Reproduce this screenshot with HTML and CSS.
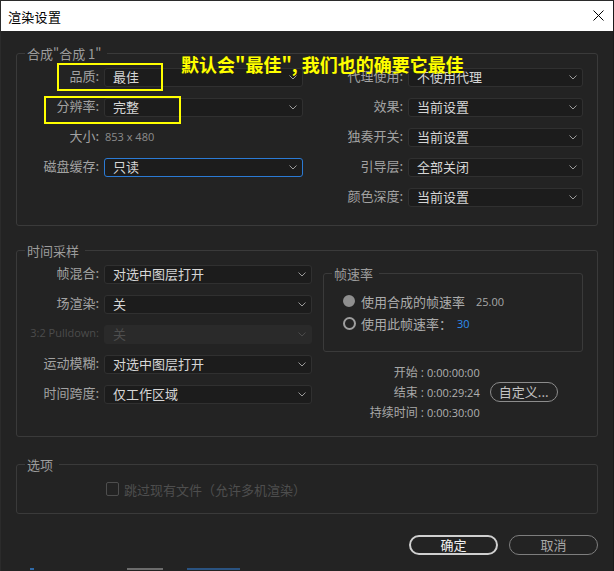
FILE: index.html
```html
<!DOCTYPE html>
<html lang="zh-CN">
<head>
<meta charset="utf-8">
<title>渲染设置</title>
<link rel="stylesheet" href="styles.css">
</head>
<body>
<div class="dialog">
  <div class="titlebar">
    <span class="title">渲染设置</span>
    <svg class="close" width="11" height="11" viewBox="0 0 11 11"><path d="M0.5 0.5 L10.5 10.5 M10.5 0.5 L0.5 10.5" stroke="#000" stroke-width="1" fill="none"/></svg>
  </div>

  <div class="content">
    <section class="group g1">
      <div class="group-title">合成"合成 1"</div>
      <div class="grid1">
        <span class="lbl">品质:</span>
        <div class="select"><span>最佳</span><svg class="chev" width="8" height="5" viewBox="0 0 8 5"><path d="M0.5 0.5 L4 4 L7.5 0.5" /></svg></div>
        <span class="lbl">代理使用:</span>
        <div class="select"><span>不使用代理</span><svg class="chev" width="8" height="5" viewBox="0 0 8 5"><path d="M0.5 0.5 L4 4 L7.5 0.5" /></svg></div>

        <span class="lbl">分辨率:</span>
        <div class="select"><span>完整</span><svg class="chev" width="8" height="5" viewBox="0 0 8 5"><path d="M0.5 0.5 L4 4 L7.5 0.5" /></svg></div>
        <span class="lbl">效果:</span>
        <div class="select"><span>当前设置</span><svg class="chev" width="8" height="5" viewBox="0 0 8 5"><path d="M0.5 0.5 L4 4 L7.5 0.5" /></svg></div>

        <span class="lbl">大小:</span>
        <span class="size">853 x 480</span>
        <span class="lbl">独奏开关:</span>
        <div class="select"><span>当前设置</span><svg class="chev" width="8" height="5" viewBox="0 0 8 5"><path d="M0.5 0.5 L4 4 L7.5 0.5" /></svg></div>

        <span class="lbl">磁盘缓存:</span>
        <div class="select focus"><span>只读</span><svg class="chev" width="8" height="5" viewBox="0 0 8 5"><path d="M0.5 0.5 L4 4 L7.5 0.5" /></svg></div>
        <span class="lbl">引导层:</span>
        <div class="select"><span>全部关闭</span><svg class="chev" width="8" height="5" viewBox="0 0 8 5"><path d="M0.5 0.5 L4 4 L7.5 0.5" /></svg></div>

        <span></span>
        <span></span>
        <span class="lbl">颜色深度:</span>
        <div class="select"><span>当前设置</span><svg class="chev" width="8" height="5" viewBox="0 0 8 5"><path d="M0.5 0.5 L4 4 L7.5 0.5" /></svg></div>
      </div>
    </section>

    <section class="group g2">
      <div class="group-title">时间采样</div>
      <div class="g2-body">
        <div class="grid2">
          <span class="lbl">帧混合:</span>
          <div class="select"><span>对选中图层打开</span><svg class="chev" width="8" height="5" viewBox="0 0 8 5"><path d="M0.5 0.5 L4 4 L7.5 0.5" /></svg></div>
          <span class="lbl">场渲染:</span>
          <div class="select"><span>关</span><svg class="chev" width="8" height="5" viewBox="0 0 8 5"><path d="M0.5 0.5 L4 4 L7.5 0.5" /></svg></div>
          <span class="lbl latin disabled-text">3:2 Pulldown:</span>
          <div class="select disabled"><span>关</span><svg class="chev" width="8" height="5" viewBox="0 0 8 5"><path d="M0.5 0.5 L4 4 L7.5 0.5" /></svg></div>
          <span class="lbl">运动模糊:</span>
          <div class="select"><span>对选中图层打开</span><svg class="chev" width="8" height="5" viewBox="0 0 8 5"><path d="M0.5 0.5 L4 4 L7.5 0.5" /></svg></div>
          <span class="lbl">时间跨度:</span>
          <div class="select"><span>仅工作区域</span><svg class="chev" width="8" height="5" viewBox="0 0 8 5"><path d="M0.5 0.5 L4 4 L7.5 0.5" /></svg></div>
        </div>

        <div class="right-panel">
          <div class="group sub">
            <div class="group-title">帧速率</div>
            <div class="sub-body">
              <div class="radio-row"><span class="radio on"></span><span class="radio-text">使用合成的帧速率</span><span class="num">25.00</span></div>
              <div class="radio-row"><span class="radio"></span><span class="radio-text">使用此帧速率：</span><span class="num blue">30</span></div>
            </div>
          </div>
          <div class="times">
            <span class="tlbl">开始<span class="colon">:</span></span>
            <span class="tval">0:00:00:00</span>
            <span></span>
            <span class="tlbl">结束<span class="colon">:</span></span>
            <span class="tval">0:00:29:24</span>
            <span><button class="pill custom">自定义...</button></span>
            <span class="tlbl">持续时间<span class="colon">:</span></span>
            <span class="tval">0:00:30:00</span>
            <span></span>
          </div>
        </div>
      </div>
    </section>

    <section class="group g3">
      <div class="group-title">选项</div>
      <div class="opts">
        <span class="checkbox"></span>
        <span class="opt-text">跳过现有文件（允许多机渲染）</span>
      </div>
    </section>

    <div class="buttons">
      <button class="pill big primary">确定</button>
      <button class="pill big">取消</button>
    </div>

    <div class="peek">
      <span class="pk pk-blue1"></span>
      <span class="pk pk-gray"></span>
      <span class="pk pk-blue2"></span>
    </div>
  </div>

  <div class="note-box nb1"></div>
  <div class="note-box nb2"></div>
  <div class="note-text">默认会"最佳", 我们也的确要它最佳</div>
</div>
</body>
</html>
```

FILE: styles.css
```css
* { box-sizing: border-box; }

html, body {
  margin: 0;
  padding: 0;
}

body {
  width: 614px;
  height: 571px;
  overflow: hidden;
  background: #232323;
  font-family: "Noto Sans CJK SC", "Noto Sans", sans-serif;
  font-size: 13px;
  line-height: 19px;
  color: #a2a2a2;
}

.dialog {
  position: relative;
  height: 571px;
  border-top: 1px solid #2b2b2b;
  border-left: 1px solid #2b2b2b;
  border-right: 1px solid #1a1a1a;
}

.titlebar {
  height: 30px;
  background: #ffffff;
  display: flex;
  align-items: center;
  justify-content: space-between;
  padding: 0 9px 0 7px;
  color: #000;
}

.title {
  font-size: 13px;
  letter-spacing: 0.3px;
}

.close { display: block; margin-top: -1px; }

.content {
  padding: 22px 15px 0 15px;
}

.group {
  border: 1px solid #3a3a3a;
  border-radius: 3px;
}

.group-title {
  width: max-content;
  height: 19px;
  line-height: 19px;
  margin: -10px 0 0 8px;
  padding: 0 6px 0 2px;
  background: #232323;
  color: #9c9c9c;
}

.lbl {
  text-align: right;
  white-space: nowrap;
  line-height: 16px;
}

.latin {
  font-family: "Open Sans", "Noto Sans", sans-serif;
  font-size: 11px;
}

.disabled-text { color: #4c4c4c; }

.select {
  height: 19px;
  display: flex;
  align-items: center;
  justify-content: space-between;
  padding: 0 5px 3px 8px;
  background: #1c1c1c;
  border: 1px solid #303030;
  border-radius: 3px;
  color: #d6d6d6;
  white-space: nowrap;
  line-height: 17px;
}

.select .chev { margin-bottom: -3px; }

.select.focus { border-color: #2b7ad4; }

.select.disabled {
  background: #2a2a2a;
  border-color: #2a2a2a;
  color: #4e4e4e;
}

.chev path {
  fill: none;
  stroke: #9a9a9a;
  stroke-width: 1;
}

.select.disabled .chev path { stroke: #4a4a4a; }

/* group 1 */
.grid1 {
  display: grid;
  grid-template-columns: 82px 199px 95px 175px;
  grid-auto-rows: 19px;
  column-gap: 5px;
  row-gap: 11px;
  margin-top: 5px;
  padding-bottom: 18px;
}

.size {
  font-family: "Open Sans", "Noto Sans", sans-serif;
  font-size: 11px;
  line-height: 17px;
  color: #8c8c8c;
  padding-left: 1px;
}

/* group 2 */
.g2 { margin-top: 24px; }

.g2-body {
  display: flex;
  align-items: flex-start;
  margin-top: 5px;
  padding-bottom: 14px;
}

.grid2 {
  display: grid;
  grid-template-columns: 82px 208px;
  grid-auto-rows: 19px;
  column-gap: 5px;
  row-gap: 11px;
}

.right-panel {
  width: 260px;
  margin-left: 11px;
  margin-top: 8px;
}

.sub-body {
  padding: 8px 0 18px 19px;
}

.radio-row {
  display: flex;
  align-items: center;
  height: 20px;
}

.radio-row + .radio-row { margin-top: 2px; }

.radio {
  width: 13px;
  height: 13px;
  border-radius: 50%;
  border: 2px solid #9e9e9e;
  flex: none;
}

.radio.on {
  background: #8f8f8f;
  border-color: #8f8f8f;
  width: 12px;
  height: 12px;
  margin-right: 1px;
}

.radio-text {
  margin-left: 5px;
  color: #ababab;
}

.num {
  font-family: "Open Sans", "Noto Sans", sans-serif;
  font-size: 11px;
  color: #a8a8a8;
  margin-left: 11px;
}

.radio-text + .num.blue { margin-left: 5px; }

.num.blue { color: #2d8ef0; }

.times {
  display: grid;
  grid-template-columns: 101px auto 1fr;
  grid-auto-rows: 20px;
  margin-top: 10px;
  align-items: center;
}

.tlbl {
  text-align: right;
  font-size: 12px;
  color: #a8a8a8;
  white-space: nowrap;
}

.colon {
  font-family: "Open Sans", "Noto Sans", sans-serif;
  margin-left: 3px;
}

.tval {
  font-family: "Open Sans", "Noto Sans", sans-serif;
  font-size: 11px;
  color: #b0b0b0;
  margin-left: 3px;
}

.pill {
  font-family: "Noto Sans CJK SC", "Noto Sans", sans-serif;
  font-size: 13px;
  line-height: 16px;
  background: transparent;
  border: 1.5px solid #8c8c8c;
  border-radius: 10px;
  color: #c4c4c4;
  padding: 0;
  display: block;
}

.custom {
  width: 68px;
  height: 20px;
  margin-left: 10px;
}

/* group 3 */
.g3 { margin-top: 27px; }

.opts {
  display: flex;
  align-items: center;
  height: 20px;
  margin-top: 5px;
  margin-bottom: 14px;
  padding-left: 89px;
  box-sizing: content-box;
}

.checkbox {
  width: 13px;
  height: 14px;
  border: 1.5px solid #4e4e4e;
  border-radius: 2px;
  flex: none;
}

.opt-text {
  margin-left: 5px;
  color: #4e4e4e;
}

.buttons {
  display: flex;
  justify-content: flex-end;
  gap: 11px;
  margin-top: 21px;
}

.big {
  width: 89px;
  height: 20px;
  border-color: #7e7e7e;
  color: #a8a8a8;
}

.big.primary {
  border: 2px solid #cfcfcf;
  color: #f2f2f2;
}

/* partially visible content below the dialog */
.peek {
  display: flex;
  height: 3px;
  margin-top: 12px;
}

.pk { display: block; height: 2px; margin-top: 1px; }
.pk-blue1 { width: 4px; margin-left: 14px; background: #2f6aa8; }
.pk-gray { width: 36px; margin-left: 93px; background: #6c6c6c; }
.pk-blue2 { width: 53px; margin-left: 24px; background: #2c5f99; opacity: 0.8; }

/* yellow annotations overlaid on the screenshot */
.note-box {
  position: absolute;
  border: 2px solid #ffff00;
}

.nb1 { left: 56px; top: 62px; width: 106px; height: 28px; }
.nb2 { left: 43px; top: 95px; width: 137px; height: 28px; }

.note-text {
  position: absolute;
  left: 180px;
  top: 51px;
  font-size: 18px;
  line-height: 24px;
  font-weight: 700;
  color: #ffff00;
  white-space: nowrap;
  text-shadow: 0 0 1px #3a3a00;
}
```
